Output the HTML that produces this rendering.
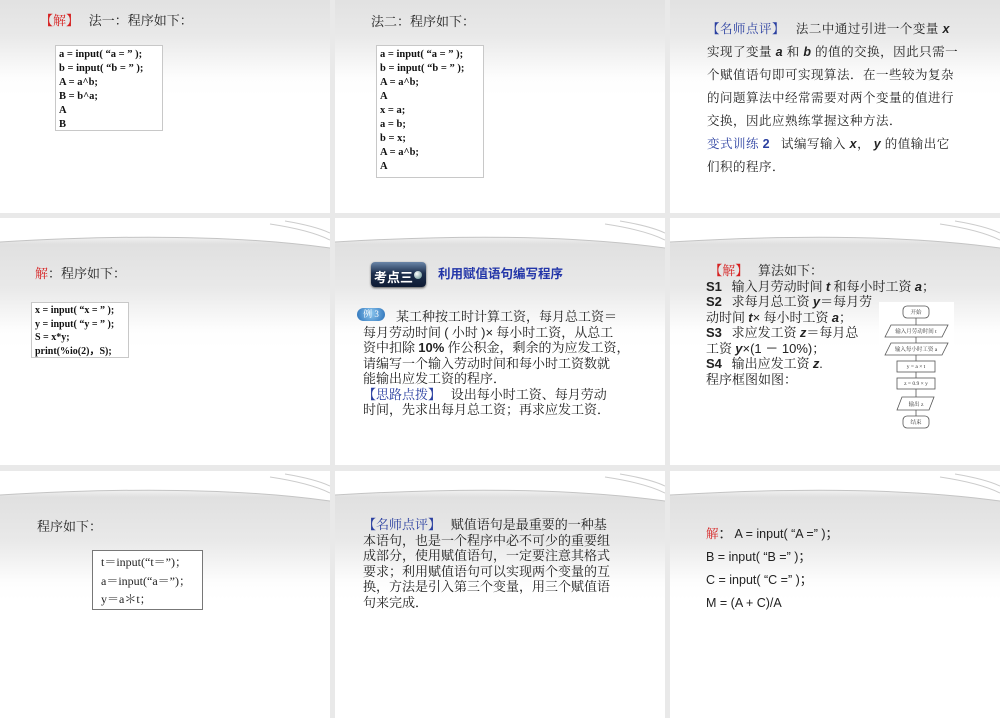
<!DOCTYPE html>
<html><head><meta charset="utf-8">
<style>
html,body{margin:0;padding:0;}
body{width:1000px;height:600px;position:relative;overflow:hidden;background:#e9e9e9;font-family:"Liberation Serif","Noto Serif CJK SC",serif;color:#222;}
.s{position:absolute;width:330px;height:247px;overflow:hidden;background:linear-gradient(to bottom,#fff 0,#fff 14px,#e0e0e0 26px,#e9e9e9 70px,#fdfdfd 112px,#fff 130px,#fff);}
.s svg.sw{position:absolute;left:0;top:0;}
.a{position:absolute;white-space:nowrap;}
.code{position:absolute;background:#fff;border:1px solid #c8c8c8;font-family:"Liberation Serif",serif;font-weight:bold;font-size:10.5px;line-height:14px;padding:2px 3px;box-sizing:border-box;color:#111;}
.red{color:#d62020;}
.blue{color:#2a3fa0;}
.sans{font-family:"Liberation Sans","Noto Sans CJK SC",sans-serif;}
.t{font-size:13px;}
.b i{font-family:"Liberation Sans",sans-serif;font-weight:bold;}
</style></head><body>

<div class="s" style="left:0;top:-34px"><svg class="sw" width="330" height="40"><path d="M0,0H330V30Q200,12 0,24Z" fill="#fff"/><path d="M0,24Q200,12 330,30" stroke="#c4c4c4" fill="none" stroke-width="1"/></svg></div>
<div class="s" style="left:335px;top:-34px"><svg class="sw" width="330" height="40"><path d="M0,0H330V30Q200,12 0,24Z" fill="#fff"/><path d="M0,24Q200,12 330,30" stroke="#c4c4c4" fill="none" stroke-width="1"/></svg></div>
<div class="s" style="left:670px;top:-34px"><svg class="sw" width="330" height="40"><path d="M0,0H330V30Q200,12 0,24Z" fill="#fff"/><path d="M0,24Q200,12 330,30" stroke="#c4c4c4" fill="none" stroke-width="1"/></svg></div>
<div class="s" style="left:0;top:218px"><svg class="sw" width="330" height="40"><path d="M0,0H330V30Q200,12 0,24Z" fill="#fff"/><path d="M0,24Q200,12 330,30" stroke="#c4c4c4" fill="none" stroke-width="1"/><path d="M270,6Q310,12 330,22M285,3Q315,8 330,15" stroke="#ccc" fill="none"/></svg></div>
<div class="s" style="left:335px;top:218px"><svg class="sw" width="330" height="40"><path d="M0,0H330V30Q200,12 0,24Z" fill="#fff"/><path d="M0,24Q200,12 330,30" stroke="#c4c4c4" fill="none" stroke-width="1"/><path d="M270,6Q310,12 330,22M285,3Q315,8 330,15" stroke="#ccc" fill="none"/></svg></div>
<div class="s" style="left:670px;top:218px"><svg class="sw" width="330" height="40"><path d="M0,0H330V30Q200,12 0,24Z" fill="#fff"/><path d="M0,24Q200,12 330,30" stroke="#c4c4c4" fill="none" stroke-width="1"/><path d="M270,6Q310,12 330,22M285,3Q315,8 330,15" stroke="#ccc" fill="none"/></svg></div>
<div class="s" style="left:0;top:471px"><svg class="sw" width="330" height="40"><path d="M0,0H330V30Q200,12 0,24Z" fill="#fff"/><path d="M0,24Q200,12 330,30" stroke="#c4c4c4" fill="none" stroke-width="1"/><path d="M270,6Q310,12 330,22M285,3Q315,8 330,15" stroke="#ccc" fill="none"/></svg></div>
<div class="s" style="left:335px;top:471px"><svg class="sw" width="330" height="40"><path d="M0,0H330V30Q200,12 0,24Z" fill="#fff"/><path d="M0,24Q200,12 330,30" stroke="#c4c4c4" fill="none" stroke-width="1"/><path d="M270,6Q310,12 330,22M285,3Q315,8 330,15" stroke="#ccc" fill="none"/></svg></div>
<div class="s" style="left:670px;top:471px"><svg class="sw" width="330" height="40"><path d="M0,0H330V30Q200,12 0,24Z" fill="#fff"/><path d="M0,24Q200,12 330,30" stroke="#c4c4c4" fill="none" stroke-width="1"/><path d="M270,6Q310,12 330,22M285,3Q315,8 330,15" stroke="#ccc" fill="none"/></svg></div>

<div class="a t" style="left:40px;top:10px"><span class="red">【解】</span>&nbsp;&nbsp;&nbsp;法一：程序如下：</div>
<div class="code" style="left:55px;top:45px;width:108px;height:86px">a = input( “a = ” );<br>b = input( “b = ” );<br>A = a^b;<br>B = b^a;<br>A<br>B</div>

<div class="a t" style="left:371px;top:11px">法二：程序如下：</div>
<div class="code" style="left:376px;top:45px;width:108px;height:133px">a = input( “a = ” );<br>b = input( “b = ” );<br>A = a^b;<br>A<br>x = a;<br>a = b;<br>b = x;<br>A = a^b;<br>A</div>

<div class="a b" style="left:707px;top:18px;font-size:12.5px;line-height:23px;letter-spacing:0.5px">
<span class="blue">【名师点评】</span>&nbsp;&nbsp;&nbsp;法二中通过引进一个变量 <i>x</i><br>
实现了变量 <i>a</i> 和 <i>b</i> 的值的交换，因此只需一<br>
个赋值语句即可实现算法．在一些较为复杂<br>
的问题算法中经常需要对两个变量的值进行<br>
交换，因此应熟练掌握这种方法．<br>
<span class="blue">变式训练 <b class="sans">2</b></span>&nbsp;&nbsp;&nbsp;试编写输入 <i>x</i>，&nbsp;<i>y</i> 的值输出它<br>
们积的程序．</div>

<div class="a t" style="left:35px;top:263px"><span class="red">解</span>：程序如下：</div>
<div class="code" style="left:31px;top:302px;width:98px;height:56px;line-height:13.5px;font-size:10px;padding-top:1px">x = input( “x = ” );<br>y = input( “y = ” );<br>S = x*y;<br>print(%io(2)，S);</div>

<div class="a" style="left:371px;top:262px;width:55px;height:25px;border-radius:4px;background:linear-gradient(#6a86a8,#1d2f4d 45%,#0e1b33);box-shadow:0 1px 2px #555"></div>
<div class="a sans" style="left:374px;top:267px;color:#fff;font-weight:bold;font-size:13px">考点三</div>
<div class="a" style="left:414px;top:271px;width:8px;height:8px;border-radius:50%;background:radial-gradient(circle at 35% 35%,#fff,#8aa 70%)"></div>
<div class="a sans blue" style="left:438px;top:263px;font-weight:bold;font-size:12.5px;color:#2235a8">利用赋值语句编写程序</div>
<div class="a" style="left:357px;top:308px;width:28px;height:13px;border-radius:7px;background:radial-gradient(circle at 50% 40%,#8ec8f0,#2a70b8);color:#fff;font-size:9px;line-height:13px;text-align:center">例 3</div>
<div class="a b" style="left:363px;top:309px;font-size:13px;line-height:15.5px">
<span style="padding-left:33px"></span>某工种按工时计算工资，每月总工资＝<br>
每月劳动时间 <span class="sans">(</span> 小时 <span class="sans">)×</span> 每小时工资，从总工<br>
资中扣除 <b class="sans">10%</b> 作公积金，剩余的为应发工资，<br>
请编写一个输入劳动时间和每小时工资数就<br>
能输出应发工资的程序．<br>
<span class="blue">【思路点拨】</span>&nbsp;&nbsp;&nbsp;设出每小时工资、每月劳动<br>
时间，先求出每月总工资；再求应发工资．</div>

<div class="a b" style="left:706px;top:263px;font-size:13px;line-height:15.5px">
&nbsp;<span class="red">【解】</span>&nbsp;&nbsp;&nbsp;算法如下：<br>
<b class="sans">S1</b>&nbsp;&nbsp;&nbsp;输入月劳动时间 <i>t</i> 和每小时工资 <i>a</i>；<br>
<b class="sans">S2</b>&nbsp;&nbsp;&nbsp;求每月总工资 <i>y</i>＝每月劳<br>
动时间 <i>t</i><span class="sans">×</span> 每小时工资 <i>a</i>；<br>
<b class="sans">S3</b>&nbsp;&nbsp;&nbsp;求应发工资 <i>z</i>＝每月总<br>
工资 <i>y</i><span class="sans">×(1 － 10%)</span>；<br>
<b class="sans">S4</b>&nbsp;&nbsp;&nbsp;输出应发工资 <i>z</i>.<br>
程序框图如图：</div>
<svg class="a" style="left:879px;top:302px" width="75" height="130" viewBox="0 0 75 130" font-family="Liberation Serif,Noto Serif CJK SC,serif" font-size="5.5" text-anchor="middle">
<rect width="75" height="130" fill="#fff"/>
<g stroke="#555" fill="none" stroke-width="0.8">
<line x1="37" y1="16" x2="37" y2="114"/>
<rect x="24" y="4" width="26" height="12" rx="4" fill="#fff"/>
<path d="M6,35L12,23H69L63,35Z" fill="#fff"/>
<path d="M6,53L12,41H69L63,53Z" fill="#fff"/>
<rect x="18" y="59" width="38" height="11" fill="#fff"/>
<rect x="18" y="76" width="38" height="11" fill="#fff"/>
<path d="M18,108L23,95H55L50,108Z" fill="#fff"/>
<rect x="24" y="114" width="26" height="12" rx="4" fill="#fff"/>
</g>
<g fill="#333">
<text x="37" y="12">开始</text><text x="37" y="31">输入月劳动时间 t</text><text x="37" y="49">输入每小时工资 a</text>
<text x="37" y="66">y = a × t</text><text x="37" y="83">z = 0.9 × y</text><text x="37" y="104">输出 z</text><text x="37" y="122">结束</text></g>
</svg>

<div class="a t" style="left:37px;top:516px">程序如下：</div>
<div class="a" style="left:92px;top:550px;width:111px;height:60px;background:#fff;border:1px solid #777;box-sizing:border-box;font-size:12px;line-height:18.5px;padding:2px 0 0 8px">t＝input(“t＝”)；<br>a＝input(“a＝”)；<br>y＝a＊t；</div>

<div class="a" style="left:363px;top:517px;font-size:13px;line-height:15.5px">
<span class="blue">【名师点评】</span>&nbsp;&nbsp;&nbsp;赋值语句是最重要的一种基<br>
本语句，也是一个程序中必不可少的重要组<br>
成部分，使用赋值语句，一定要注意其格式<br>
要求；利用赋值语句可以实现两个变量的互<br>
换，方法是引入第三个变量，用三个赋值语<br>
句来完成．</div>

<div class="a sans" style="left:706px;top:523px;font-size:12.5px;line-height:23px">
<span class="red" style="font-family:'Liberation Serif','Noto Serif CJK SC',serif">解</span>：&nbsp;A = input( “A =” )；<br>
B = input( “B =” )；<br>
C = input( “C =” )；<br>
M = (A + C)/A</div>

</body></html>
